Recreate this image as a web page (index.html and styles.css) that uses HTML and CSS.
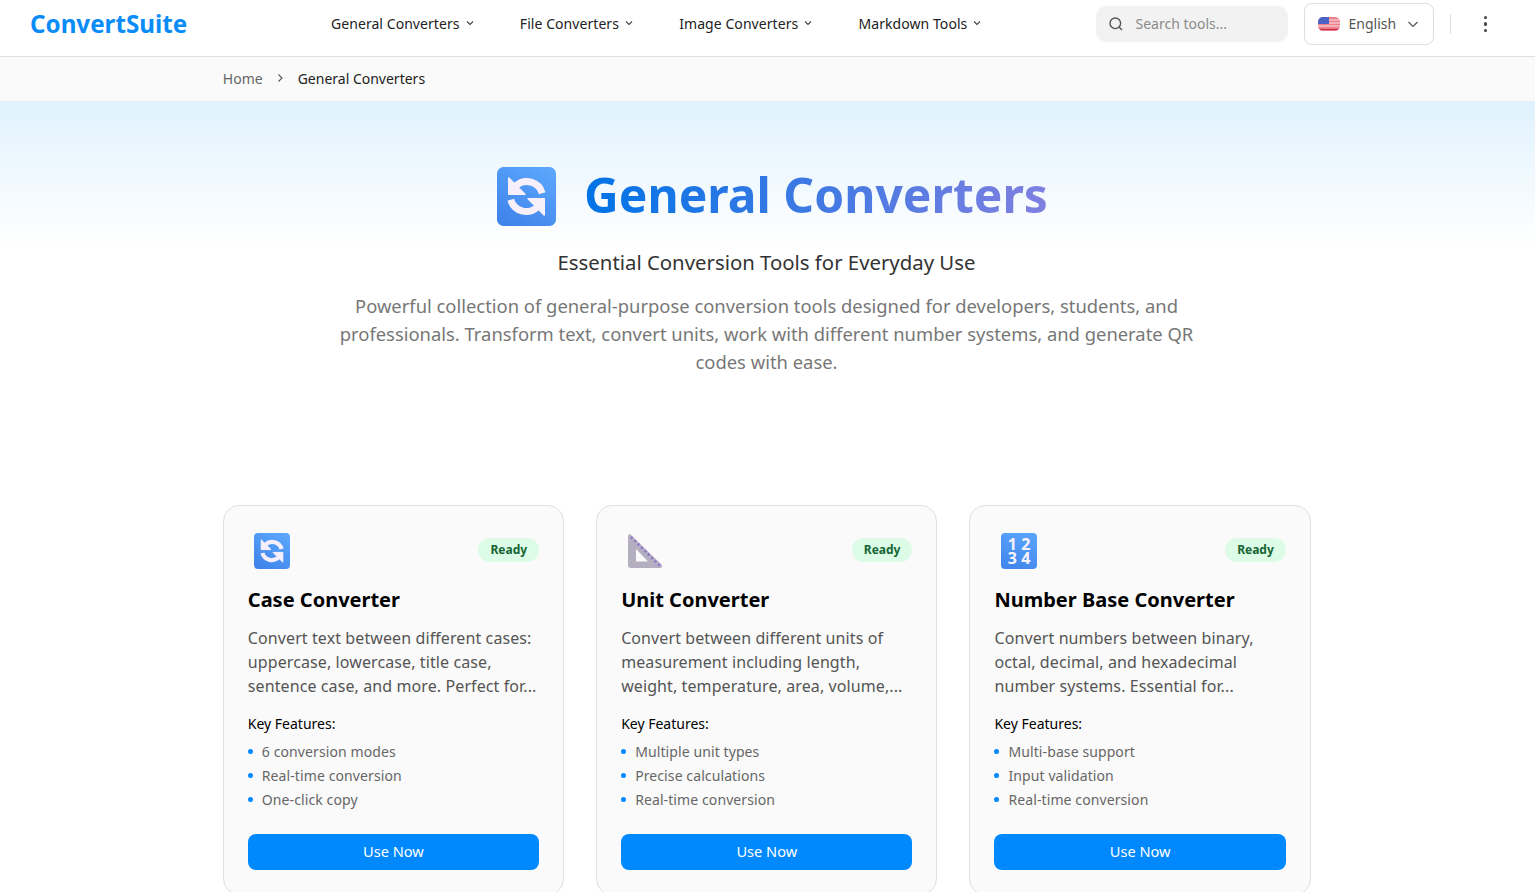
FILE: index.html
```html
<!DOCTYPE html>
<html lang="en">
<head>
    <meta charset="UTF-8">
    <meta name="viewport" content="width=device-width, initial-scale=1.0">
    <title>General Converters - ConvertSuite</title>
    <link rel="stylesheet" href="styles.css">
</head>
<body>
    <header class="topbar">
        <a class="logo" href="#">ConvertSuite</a>
        <nav class="main-nav">
            <a href="#">General Converters <svg class="caret" viewBox="0 0 10 10"><path d="M2 3.5 5 6.5 8 3.5"/></svg></a>
            <a href="#">File Converters <svg class="caret" viewBox="0 0 10 10"><path d="M2 3.5 5 6.5 8 3.5"/></svg></a>
            <a href="#">Image Converters <svg class="caret" viewBox="0 0 10 10"><path d="M2 3.5 5 6.5 8 3.5"/></svg></a>
            <a href="#">Markdown Tools <svg class="caret" viewBox="0 0 10 10"><path d="M2 3.5 5 6.5 8 3.5"/></svg></a>
        </nav>
        <div class="search">
            <svg class="search-icon" viewBox="0 0 16 16"><circle cx="7.3" cy="7.3" r="5.3"/><path d="M11.2 11.2 14 14"/></svg>
            <span>Search tools...</span>
        </div>
        <button class="lang">
            <svg class="flag" viewBox="0 0 22 14">
                <rect width="22" height="14" rx="5" fill="#f0808a"/>
                <path d="M1 3h20M0 6h22M0 9h22" stroke="#f6e6ea" stroke-width="1"/>
                <path d="M2 12.500h18" stroke="#c5304a" stroke-width="1.200"/>
                <path d="M5 0h6v7H0V5a5 5 0 0 1 5-5z" fill="#4a63c4"/>
            </svg>
            <span>English</span>
            <svg class="lang-caret" viewBox="0 0 12 12"><path d="M1.5 4 6 8.5 10.5 4"/></svg>
        </button>
        <span class="divider"></span>
        <button class="more"><i></i><i></i><i></i></button>
    </header>

    <div class="crumbs">
        <div class="wrap crumbs-row">
            <a href="#">Home</a>
            <svg viewBox="0 0 10 10"><path d="M3.5 1.5 7 5 3.5 8.5"/></svg>
            <span>General Converters</span>
        </div>
    </div>

    <section class="hero">
        <div class="hero-title">
            <svg class="hero-icon" viewBox="0 0 36 36"><use href="#cycle-icon"/></svg>
            <h1>General Converters</h1>
        </div>
        <h2>Essential Conversion Tools for Everyday Use</h2>
        <p>Powerful collection of general-purpose conversion tools designed for developers, students, and professionals. Transform text, convert units, work with different number systems, and generate QR codes with ease.</p>
    </section>

    <main class="wrap cards">
        <article class="card">
            <div class="card-top">
                <svg class="tool-icon" viewBox="0 0 36 36"><use href="#cycle-icon"/></svg>
                <span class="badge">Ready</span>
            </div>
            <h3>Case Converter</h3>
            <p class="desc">Convert text between different cases: uppercase, lowercase, title case, sentence case, and more. Perfect for...</p>
            <h4>Key Features:</h4>
            <ul>
                <li>6 conversion modes</li>
                <li>Real-time conversion</li>
                <li>One-click copy</li>
            </ul>
            <a class="use-btn" href="#">Use Now</a>
        </article>

        <article class="card">
            <div class="card-top">
                <svg class="tool-icon" viewBox="0 0 36 36">
                    <path d="M3.500 1.500 34.500 31.500Q36 35 33 35H4Q1 35 1 32V3Q2 0 3.500 1.500Z" fill="#b3afc0"/>
                    <path d="M9 16 21 28.500H9Z" fill="#fafafa"/>
                    <path d="M4 4 33 33" stroke="#8e6fd0" stroke-width="2.400" stroke-dasharray="2 2.800"/>
                </svg>
                <span class="badge">Ready</span>
            </div>
            <h3>Unit Converter</h3>
            <p class="desc">Convert between different units of measurement including length, weight, temperature, area, volume,...</p>
            <h4>Key Features:</h4>
            <ul>
                <li>Multiple unit types</li>
                <li>Precise calculations</li>
                <li>Real-time conversion</li>
            </ul>
            <a class="use-btn" href="#">Use Now</a>
        </article>

        <article class="card">
            <div class="card-top">
                <div class="num-tile">
                    <span>1</span><span>2</span><span>3</span><span>4</span>
                </div>
                <span class="badge">Ready</span>
            </div>
            <h3>Number Base Converter</h3>
            <p class="desc">Convert numbers between binary, octal, decimal, and hexadecimal number systems. Essential for...</p>
            <h4>Key Features:</h4>
            <ul>
                <li>Multi-base support</li>
                <li>Input validation</li>
                <li>Real-time conversion</li>
            </ul>
            <a class="use-btn" href="#">Use Now</a>
        </article>
    </main>

    <svg class="icon-defs" aria-hidden="true">
        <defs>
            <linearGradient id="tile" x1="0.800" y1="0" x2="0.200" y2="1">
                <stop offset="0" stop-color="#5ca6fd"/>
                <stop offset="1" stop-color="#3f84ea"/>
            </linearGradient>
            <g id="half-cycle">
                <path d="M11.500 11.500A9.800 9.800 0 0 1 27.600 16" fill="none" stroke="#f7f0fb" stroke-width="4.200"/>
                <path d="M7.200 6.800 7.200 16.600 17 16.600Z" fill="#f7f0fb" stroke="#f7f0fb" stroke-width="1" stroke-linejoin="round"/>
            </g>
            <g id="cycle-icon">
                <rect width="36" height="36" rx="4" fill="url(#tile)"/>
                <use href="#half-cycle"/>
                <use href="#half-cycle" transform="rotate(180 18 18)"/>
            </g>
        </defs>
    </svg>
</body>
</html>
```

FILE: styles.css
```css
* {
    box-sizing: border-box;
}

html, body {
    height: 892px;
    overflow: hidden;
}

body {
    margin: 0;
    font-family: "Noto Sans", "Open Sans", sans-serif;
    color: #000;
    background: #fff;
}

a {
    color: inherit;
    text-decoration: none;
}

.wrap {
    width: 1088px;
    margin-left: 222.800px;
}

/* top bar */
.topbar {
    display: flex;
    align-items: center;
    height: 57px;
    padding: 0 40px 8px 30px;
    background: #fff;
    border-bottom: 1px solid #e0e0e0;
}

.logo {
    width: 301px;
    padding-bottom: 2px;
    font-size: 24.200px;
    font-weight: 700;
    color: #0a8cf8;
}

.main-nav {
    display: flex;
    gap: 45.300px;
    flex: 1;
    padding-bottom: 2px;
    font-size: 14px;
    letter-spacing: .06px;
    color: #222;
}

.main-nav a {
    display: flex;
    align-items: center;
    gap: 5px;
}

.caret {
    width: 10px;
    height: 10px;
    fill: none;
    stroke: #444;
    stroke-width: 1.100;
}

.search {
    display: flex;
    align-items: center;
    gap: 12px;
    width: 192px;
    height: 36px;
    padding: 0 12px;
    margin-right: 16px;
    background: #f2f2f2;
    border-radius: 10px;
    font-size: 14px;
    color: #8a8a8a;
}

.search span {
    margin-top: -2px;
}

.search-icon {
    width: 16px;
    height: 16px;
    fill: none;
    stroke: #555;
    stroke-width: 1.400;
}

.lang {
    display: flex;
    align-items: center;
    width: 130px;
    height: 42px;
    padding: 0 14px 0 13px;
    background: #fff;
    border: 1px solid #ddd;
    border-radius: 8px;
    font: 14px "Noto Sans", sans-serif;
    color: #555;
}

.lang span {
    margin-top: -2px;
}

.flag {
    width: 22px;
    height: 14px;
    margin-right: 9px;
}

.lang-caret {
    width: 12px;
    height: 12px;
    margin-left: auto;
    fill: none;
    stroke: #555;
    stroke-width: 1.200;
}

.divider {
    width: 1px;
    height: 20px;
    margin: 0 25px 0 16px;
    background: #e0e0e0;
}

.more {
    display: flex;
    flex-direction: column;
    gap: 3px;
    padding: 0 8px;
    background: none;
    border: 0;
}

.more i {
    width: 3.500px;
    height: 3.500px;
    border-radius: 50%;
    background: #444;
}

/* breadcrumb */
.crumbs {
    height: 44px;
    padding-bottom: 2px;
    background: #fafafa;
    font-size: 14px;
}

.crumbs-row {
    display: flex;
    align-items: center;
    gap: 12.500px;
    height: 100%;
    color: #222;
}

.crumbs-row a {
    color: #666;
}

.crumbs-row svg {
    width: 10px;
    height: 10px;
    fill: none;
    stroke: #555;
    stroke-width: 1.100;
}

/* hero */
.hero {
    height: 404px;
    padding: 64px 2px 0 0;
    text-align: center;
    background: linear-gradient(#e0f2fe 0, #fff 145px);
}

.hero-title {
    display: flex;
    justify-content: center;
    align-items: flex-start;
    gap: 28px;
    height: 60px;
    padding-left: 12px;
}

.hero-icon {
    width: 59px;
    height: 59px;
    margin-top: 2px;
}

.hero-title h1 {
    margin: 0;
    font-size: 48px;
    line-height: 60px;
    font-weight: 700;
    background: linear-gradient(90deg, #0073e6, #8080e0);
    -webkit-background-clip: text;
    background-clip: text;
    color: transparent;
}

.hero h2 {
    margin: 21px 0 14px;
    font-size: 20.350px;
    line-height: 32px;
    font-weight: 400;
    color: #333;
}

.hero p {
    width: 860px;
    margin: 0 auto;
    font-size: 18.400px;
    line-height: 28px;
    color: #777;
}

/* tool cards */
.cards {
    display: grid;
    grid-template-columns: repeat(3, 1fr);
    gap: 32px;
    align-items: start;
}

.card {
    padding: 24px;
    background: #fafafa;
    border: 1px solid #e0e0e0;
    border-radius: 16px;
}

.card-top {
    display: flex;
    justify-content: space-between;
    align-items: center;
    height: 40px;
    padding-left: 6px;
}

.tool-icon {
    width: 36px;
    height: 36px;
    margin-top: 2px;
}

.num-tile {
    display: grid;
    grid-template-columns: 13.500px 13.500px;
    grid-auto-rows: 14px;
    width: 36px;
    height: 36px;
    margin: 2px 0 0 1px;
    padding: 4px 5px 0 4px;
    border-radius: 4px;
    background: linear-gradient(200deg, #5ca6fd, #3f84ea);
    font-size: 16px;
    line-height: 14px;
    font-weight: 700;
    text-align: center;
    color: #f7f3fb;
}

.badge {
    padding: 0 12px;
    font-size: 12px;
    line-height: 24px;
    font-weight: 700;
    color: #166534;
    background: #dcfce7;
    border-radius: 12px;
}

.card h3 {
    margin: 16px 0 12px;
    font-size: 20px;
    line-height: 28px;
    font-weight: 700;
}

.desc {
    height: 72px;
    margin: 0 0 16px;
    font-size: 16px;
    line-height: 24px;
    letter-spacing: .1px;
    color: #555;
}

.card h4 {
    margin: 0 0 5px;
    font-size: 14px;
    line-height: 20px;
    font-weight: 400;
}

.card ul {
    margin: 0 0 23px;
    padding: 0;
    list-style: none;
}

.card li {
    display: flex;
    align-items: center;
    gap: 9px;
    height: 24px;
    font-size: 14px;
    letter-spacing: .1px;
    color: #666;
}

.card li::before {
    content: "";
    width: 5px;
    height: 5px;
    border-radius: 50%;
    background: #0088ff;
}

.use-btn {
    display: block;
    height: 36px;
    font-size: 14.600px;
    line-height: 34px;
    text-align: center;
    color: #fff;
    background: #0088ff;
    border-radius: 8px;
}

.icon-defs {
    width: 0;
    height: 0;
}
```
